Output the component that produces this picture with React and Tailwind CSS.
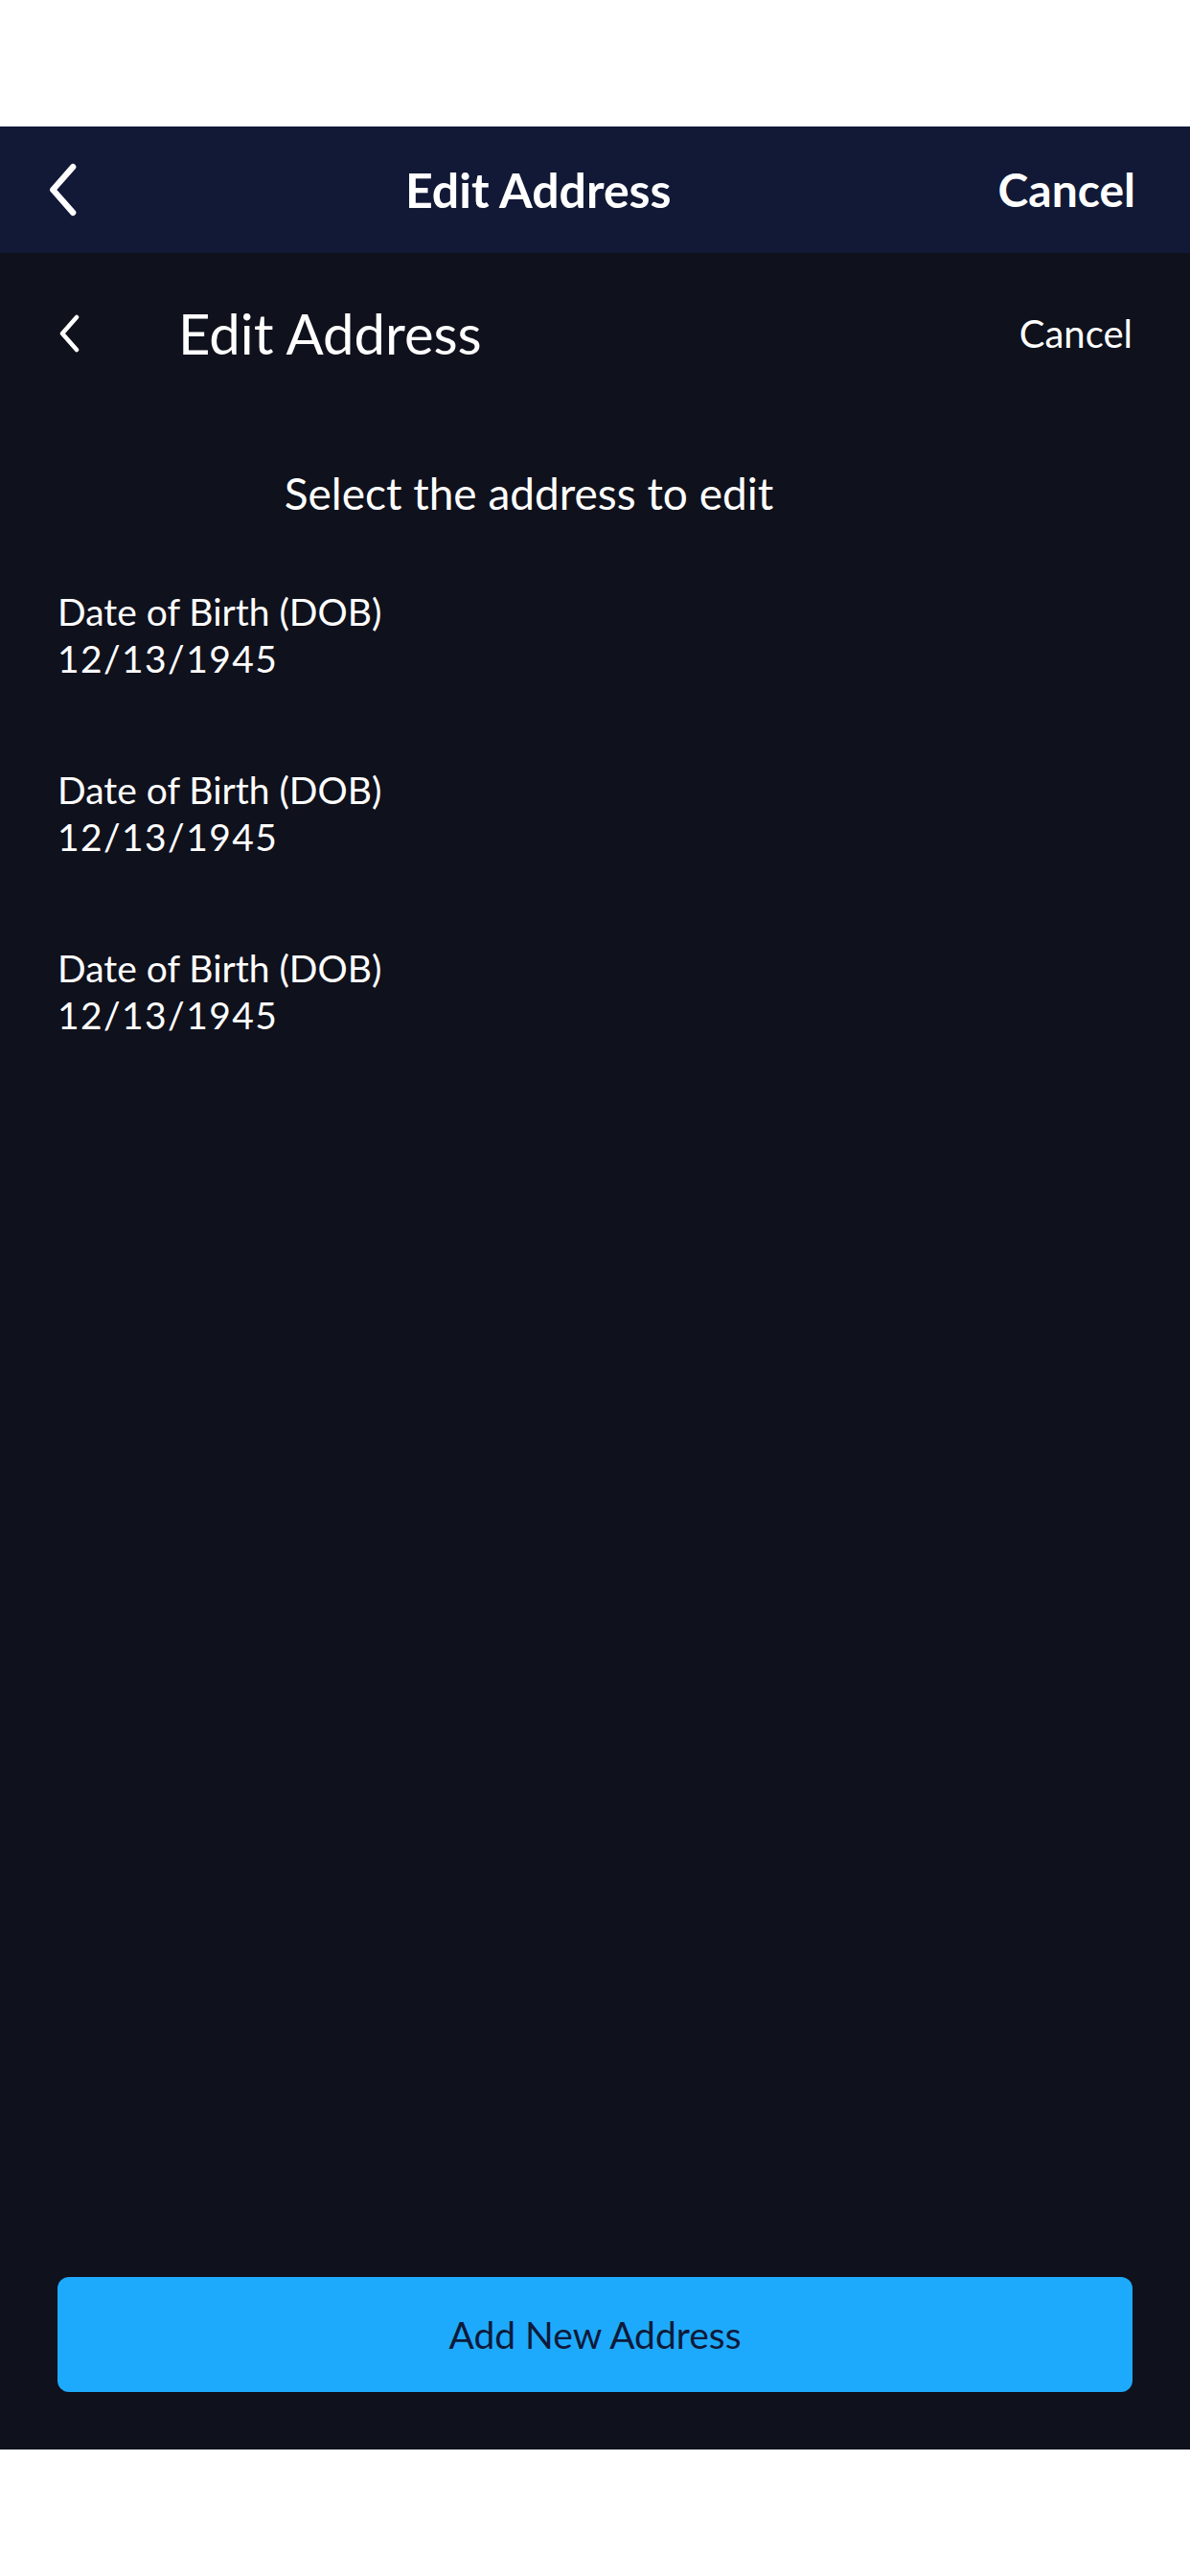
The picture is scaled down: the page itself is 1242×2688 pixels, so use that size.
import React from "react";

const addresses = [
  { label: "Date of Birth (DOB)", value: "12/13/1945" },
  { label: "Date of Birth (DOB)", value: "12/13/1945" },
  { label: "Date of Birth (DOB)", value: "12/13/1945" },
];

const Chevron = ({ className }) => (
  <svg viewBox="0 0 24 40" fill="none" className={className}>
    <path d="M20 3 L5 20 L20 37" stroke="currentColor" strokeWidth="4.5" strokeLinecap="round" strokeLinejoin="round" />
  </svg>
);

export default function App() {
  return (
    <div className="w-[1242px] h-[2688px] bg-white flex flex-col font-['Lato','Noto_Sans',sans-serif]">
      <div className="h-[132px] bg-white" />

      {/* Nav bar */}
      <header className="h-[132px] bg-[#111936] flex items-center pl-[48px] pr-[57px] text-white">
        <Chevron className="w-[34px] h-[56px]" />
        <h1 className="flex-1 text-center text-[50px] font-bold leading-none">Edit Address</h1>
        <button className="text-[48px] font-bold leading-none">Cancel</button>
      </header>

      {/* Screen */}
      <main className="flex-1 bg-[#0f111c] flex flex-col text-white">
        <div className="h-[150px] pt-[18px] flex items-center px-[60px]">
          <Chevron className="w-[24px] h-[40px] text-white" />
          <h2 className="ml-[102px] text-[58px] leading-none">Edit Address</h2>
          <button className="ml-auto text-[40px] leading-none">Cancel</button>
        </div>

        <p className="mt-[78px] text-center pr-[138px] text-[46px] leading-none">Select the address to edit</p>

        <ul className="mt-[76px] px-[60px] flex flex-col gap-[88px]">
          {addresses.map((a, i) => (
            <li key={i} className="text-[39px] leading-[49px]">
              <div>{a.label}</div>
              <div className="tracking-[1.4px]">{a.value}</div>
            </li>
          ))}
        </ul>

        <div className="mt-auto px-[60px] pb-[60px]">
          <button className="w-full h-[120px] rounded-[12px] bg-[#1eaafc] text-[#0f1a3a] text-[39px]">
            Add New Address
          </button>
        </div>
      </main>

      <div className="h-[132px] bg-white" />
    </div>
  );
}
